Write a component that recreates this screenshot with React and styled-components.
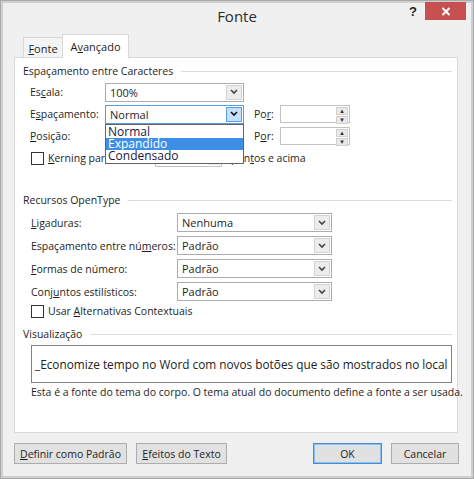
import React from 'react'
import styled, { createGlobalStyle } from 'styled-components'

const Global = createGlobalStyle`
  html, body { margin: 0; padding: 0; background: #fff; }
  body {
    font-family: "Open Sans", "Noto Sans", sans-serif;
    font-size: 10.5px;
    color: #1e1e1e;
  }
  * { box-sizing: border-box; }
  u { text-decoration-thickness: 1px; text-underline-offset: 1px; }
`

const Window = styled.div`
  width: 474px;
  height: 479px;
  background: #f0f0f0;
  border: 1px solid #a9a9a9;
  box-shadow: inset 0 0 0 2px #cfcfcf;
  display: flex;
  flex-direction: column;
`

const TitleBar = styled.div`
  height: 33px;
  display: grid;
  grid-template-columns: 1fr auto 1fr;
  align-items: start;
`

const Title = styled.div`
  grid-column: 2;
  margin-top: 6px;
  font-size: 15px;
  line-height: 18px;
  color: #2b2b2b;
`

const Controls = styled.div`
  grid-column: 3;
  display: flex;
  justify-content: flex-end;
  align-items: flex-start;
  gap: 8px;
  padding: 1px 7px 0 0;
`

const Help = styled.span`
  font-family: "Liberation Sans", Arial, sans-serif;
  font-weight: bold;
  font-size: 13px;
  margin-top: 2px;
  color: #222;
`

const Close = styled.div`
  width: 41px;
  height: 18px;
  background: #c75050;
  display: flex;
  align-items: center;
  justify-content: center;
`

const TabStrip = styled.div`
  height: 23px;
  display: flex;
  align-items: flex-end;
  padding-left: 22px;
  position: relative;
  z-index: 1;
`

const Tab = styled.div`
  width: ${p => p.w}px;
  height: ${p => (p.active ? 24 : 20)}px;
  margin-bottom: ${p => (p.active ? -1 : 0)}px;
  margin-left: ${p => (p.active ? -1 : 0)}px;
  border: 1px solid #d9d9d9;
  border-bottom: none;
  background: ${p => (p.active ? '#fff' : '#f4f4f4')};
  display: flex;
  align-items: center;
  justify-content: center;
  font-size: 11px;
  padding-top: ${p => (p.active ? 0 : 1)}px;
`

const Panel = styled.div`
  margin: 0 15px 0 13px;
  height: 376px;
  background: #fff;
  border: 1px solid #d9d9d9;
  display: flex;
  flex-direction: column;
  padding: 5px 5px 0 8px;
`

const GroupHeader = styled.div`
  height: 16px;
  margin-top: ${p => p.mt || 0}px;
  display: flex;
  align-items: center;
  gap: 8px;
  &::after {
    content: '';
    flex: 1;
    height: 1px;
    background: #dcdcdc;
  }
`

const Row = styled.div`
  height: ${p => p.h || 22}px;
  margin-top: ${p => p.mt || 0}px;
  padding-left: ${p => p.pl || 7}px;
  display: flex;
  align-items: center;
`

const Label = styled.div`
  width: ${p => p.w}px;
  margin-left: ${p => p.ml || 0}px;
  flex: none;
  white-space: nowrap;
`

const SelectBox = styled.div`
  width: ${p => p.w}px;
  height: 19px;
  flex: none;
  border: 1px solid ${p => (p.focus ? '#569de5' : '#acacac')};
  background: #fff;
  display: flex;
  align-items: stretch;
`

const SelectText = styled.div`
  flex: 1;
  padding-left: 4px;
  font-size: 11px;
  line-height: 17px;
  white-space: nowrap;
  overflow: hidden;
`

const Arrow = styled.div`
  width: 16px;
  flex: none;
  margin: 1px;
  background: ${p => (p.focus ? '#c4e0fa' : '#ececec')};
  border: 1px solid ${p => (p.focus ? '#569de5' : '#d4d4d4')};
  display: flex;
  align-items: center;
  justify-content: center;
`

const PorLabel = styled.div`
  width: 26px;
  margin-left: 10px;
  flex: none;
`

const Spin = styled.div`
  width: 70px;
  height: 18px;
  border: 1px solid #c2c2c2;
  background: #fff;
  display: flex;
  justify-content: flex-end;
  padding: 1px;
`

const SpinButtons = styled.div`
  width: 12px;
  display: flex;
  flex-direction: column;
  gap: 1px;
`

const SpinBtn = styled.div`
  flex: 1;
  background: #e9e9e9;
  border: 1px solid #d0d0d0;
  display: flex;
  align-items: center;
  justify-content: center;
  font-size: 6px;
  line-height: 1;
  color: #333;
`

const Combo = styled.div`
  width: 67px;
  height: 18px;
  flex: none;
  border: 1px solid #c2c2c2;
  background: #fff;
  display: flex;
  justify-content: flex-end;
  padding: 1px;
`

const ComboBtn = styled.div`
  width: 12px;
  background: #e9e9e9;
  display: flex;
  align-items: center;
  justify-content: center;
  font-size: 7px;
  color: #333;
`

const Check = styled.div`
  width: 13px;
  height: 13px;
  flex: none;
  border: 1px solid #333;
  background: #fff;
  margin-right: 4px;
`

const SelectWrap = styled.div`
  position: relative;
  flex: none;
`

const DropList = styled.div`
  position: absolute;
  left: 0;
  top: 19px;
  width: 139px;
  background: #fff;
  border: 1px solid #646464;
  z-index: 5;
  padding: 1px 0;
`

const DropItem = styled.div`
  height: 12px;
  line-height: 12px;
  padding-left: 2px;
  font-size: 12px;
  color: ${p => (p.active ? '#fff' : '#1a1a40')};
  background: ${p => (p.active ? '#3d8ee6' : 'transparent')};
`

const Preview = styled.div`
  margin: 3px 0 0 8px;
  width: 421px;
  height: 38px;
  border: 1px solid #828282;
  padding: 0 0 0 3px;
  display: flex;
  align-items: center;
  font-size: 11.8px;
  white-space: nowrap;
  overflow: hidden;
  color: #222;
`

const Note = styled.div`
  margin: 2px 0 0 8px;
  line-height: 14px;
  white-space: nowrap;
`

const Footer = styled.div`
  display: flex;
  align-items: center;
  padding: 10px 14px 0 13px;
  gap: 9px;
`

const Button = styled.div`
  width: ${p => p.w}px;
  height: 21px;
  margin-left: ${p => p.ml || 0}px;
  background: #e1e1e1;
  border: 1px solid ${p => (p.primary ? '#3c8fd8' : '#adadad')};
  box-shadow: ${p => (p.primary ? 'inset 0 0 0 1px #8cc0ee' : 'none')};
  display: flex;
  align-items: center;
  justify-content: center;
  white-space: nowrap;
`

function Chevron({ color = '#333' }) {
  return (
    <svg width="8" height="6" viewBox="0 0 8 6">
      <polyline points="1,1 4,4 7,1" fill="none" stroke={color} strokeWidth="1.6" />
    </svg>
  )
}

function Select({ w, value, focus }) {
  return (
    <SelectBox w={w} focus={focus}>
      <SelectText>{value}</SelectText>
      <Arrow focus={focus}><Chevron color={focus ? '#111' : '#444'} /></Arrow>
    </SelectBox>
  )
}

function SpinField() {
  return (
    <Spin>
      <SpinButtons>
        <SpinBtn>▲</SpinBtn>
        <SpinBtn>▼</SpinBtn>
      </SpinButtons>
    </Spin>
  )
}

export default function App() {
  return (
    <>
      <Global />
      <Window>
        <TitleBar>
          <Title>Fonte</Title>
          <Controls>
            <Help>?</Help>
            <Close>
              <svg width="10" height="9" viewBox="0 0 10 9">
                <path d="M1.5 1 L8.5 8 M8.5 1 L1.5 8" stroke="#fff" strokeWidth="2" />
              </svg>
            </Close>
          </Controls>
        </TitleBar>

        <TabStrip>
          <Tab w={40}><span><u>F</u>onte</span></Tab>
          <Tab w={67} active><span>A<u>v</u>ançado</span></Tab>
        </TabStrip>

        <Panel>
          <GroupHeader>Espaçamento entre Caracteres</GroupHeader>
          <Row mt={2}>
            <Label w={75}>Es<u>c</u>ala:</Label>
            <Select w={139} value="100%" />
          </Row>
          <Row>
            <Label w={75}>E<u>s</u>paçamento:</Label>
            <SelectWrap>
              <Select w={139} value="Normal" focus />
              <DropList>
                <DropItem>Normal</DropItem>
                <DropItem active>Expandido</DropItem>
                <DropItem>Condensado</DropItem>
              </DropList>
            </SelectWrap>
            <PorLabel>Po<u>r</u>:</PorLabel>
            <SpinField />
          </Row>
          <Row>
            <Label w={75}><u>P</u>osição:</Label>
            <Label w={139} />
            <PorLabel>P<u>o</u>r:</PorLabel>
            <SpinField />
          </Row>
          <Row pl={8}>
            <Check />
            <Label w={107}><u>K</u>erning para fontes:</Label>
            <Combo><ComboBtn>▼</ComboBtn></Combo>
            <Label w={100} ml={9}>pon<u>t</u>os e acima</Label>
          </Row>

          <GroupHeader mt={23}>Recursos OpenType</GroupHeader>
          <Row h={23} mt={3} pl={8}>
            <Label w={146}><u>L</u>igaduras:</Label>
            <Select w={155} value="Nenhuma" />
          </Row>
          <Row h={23} pl={8}>
            <Label w={146}>Espaçamento entre nú<u>m</u>eros:</Label>
            <Select w={155} value="Padrão" />
          </Row>
          <Row h={23} pl={8}>
            <Label w={146}><u>F</u>ormas de número:</Label>
            <Select w={155} value="Padrão" />
          </Row>
          <Row h={23} pl={8}>
            <Label w={146}>Conj<u>u</u>ntos estilísticos:</Label>
            <Select w={155} value="Padrão" />
          </Row>
          <Row h={16} pl={8}>
            <Check />
            <Label w={200}>Usar <u>A</u>lternativas Contextuais</Label>
          </Row>

          <GroupHeader mt={7}>Visualização</GroupHeader>
          <Preview>_Economize tempo no Word com novos botões que são mostrados no local onde você precisa deles.</Preview>
          <Note>Esta é a fonte do tema do corpo. O tema atual do documento define a fonte a ser usada.</Note>
        </Panel>

        <Footer>
          <Button w={113}><span><u>D</u>efinir como Padrão</span></Button>
          <Button w={91}><span><u>E</u>feitos do Texto</span></Button>
          <Button w={69} ml={77} primary>OK</Button>
          <Button w={68}>Cancelar</Button>
        </Footer>
      </Window>
    </>
  )
}
